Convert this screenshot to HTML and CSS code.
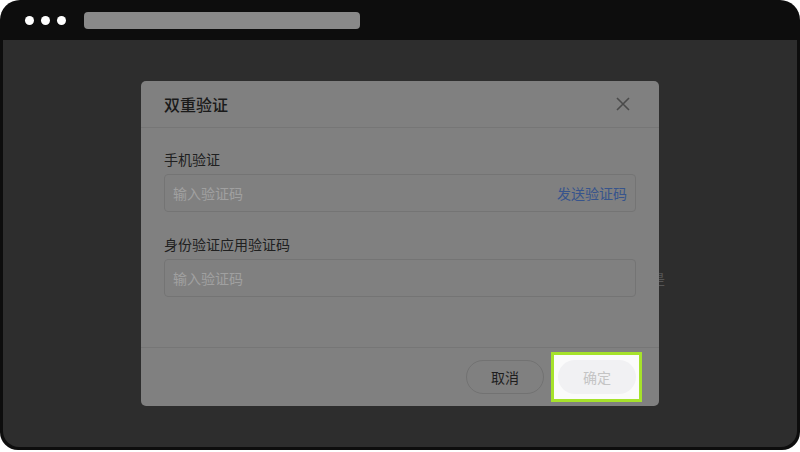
FILE: index.html
```html
<!DOCTYPE html>
<html lang="zh">
<head>
<meta charset="utf-8">
<link rel="stylesheet" href="styles.css">
</head>
<body>
<div class="frame">
  <div class="topbar">
    <div class="dots"><span class="dot"></span><span class="dot"></span><span class="dot"></span></div>
    <div class="address"></div>
  </div>
  <div class="content">
    <span class="behind">是</span>
    <div class="modal">
      <div class="modal-head">
        <span class="title">双重验证</span>
        <svg class="close" width="16" height="16" viewBox="0 0 16 16"><path d="M2 2 L14 14 M14 2 L2 14" stroke="#4a4a4a" stroke-width="1.6" fill="none"/></svg>
      </div>
      <div class="modal-body">
        <div class="label">手机验证</div>
        <div class="input"><span class="ph">输入验证码</span><span class="send">发送验证码</span></div>
        <div class="label second">身份验证应用验证码</div>
        <div class="input"><span class="ph">输入验证码</span></div>
      </div>
      <div class="modal-foot">
        <button class="btn cancel">取消</button>
        <button class="btn ok">确定</button>
      </div>
    </div>
  </div>
</div>
</body>
</html>
```
FILE: styles.css
```css
html, body { margin: 0; padding: 0; background: #ffffff; }
body { font-family: "Noto Sans CJK SC", "Noto Sans", sans-serif; }
.frame {
  width: 800px; height: 450px; background: #0d0d0d;
  border-radius: 20px 20px 18px 18px;
  display: flex; flex-direction: column; overflow: hidden;
}
.topbar { height: 40px; display: flex; align-items: center; flex-shrink: 0; }
.dots { display: flex; gap: 7px; margin-left: 25px; }
.dot { width: 9px; height: 9px; border-radius: 50%; background: #ffffff; display: block; }
.address { margin-left: 18px; width: 276px; height: 17px; background: #898989; border-radius: 4px; margin-top: 1px; }
.content {
  flex: 1; margin: 0 3px 3px 3px; background: #2d2d2d;
  border-radius: 0 0 16px 16px;
  display: flex; align-items: center; justify-content: center;
  position: relative;
}
.behind { position: absolute; left: 648px; top: 228px; font-size: 14px; color: #555555; }
.modal {
  position: relative; width: 518px; height: 325px; background: #808080;
  border-radius: 5px; display: flex; flex-direction: column;
}
.modal-head {
  height: 46px; border-bottom: 1px solid #767676; display: flex; align-items: center;
  justify-content: space-between; padding: 0 28px 0 23px;
}
.title { font-size: 16px; font-weight: 500; color: #1a1a1a; }
.close { display: block; }
.modal-body { flex: 1; padding: 21px 23px 0 23px; border-bottom: 1px solid #767676; }
.label { font-size: 14px; line-height: 20px; color: #202020; margin-bottom: 5px; }
.label.second { margin-top: 22px; }
.input {
  height: 36px; border: 1px solid #747474; border-radius: 4px;
  display: flex; align-items: center; justify-content: space-between; padding: 0 8px;
}
.ph { font-size: 14px; color: #a0a0a0; }
.send { font-size: 14px; color: #37548c; }
.modal-foot {
  height: 58px; display: flex; align-items: center; justify-content: flex-end;
  gap: 14px; padding: 0 23px; isolation: isolate;
}
.btn {
  width: 78px; height: 34px; border-radius: 17px; font-family: inherit; font-size: 14px;
  position: relative;
}
.cancel { background: #808080; border: 1px solid #727272; color: #1e1e1e; }
.ok { background: #f1f1f3; border: none; color: #c4c4c4; }
.ok::before {
  content: ""; position: absolute; top: -8px; bottom: -8px; left: -7px; right: -6px;
  background: #fbfbfb; border: 3px solid #a6e22b; z-index: -1;
}
```
